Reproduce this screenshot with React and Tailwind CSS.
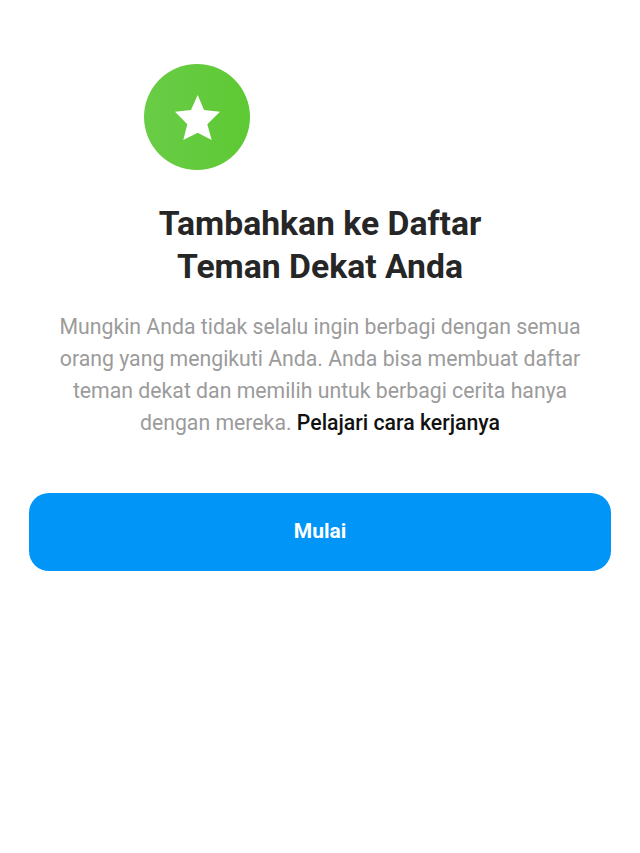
export default function App() {
  return (
    <div className="min-h-[853px] bg-white font-['Roboto',sans-serif] flex flex-col">
      <div className="pt-[64px] pl-[144px]">
        <div className="h-[106px] w-[106px] rounded-full bg-gradient-to-r from-[#69cc46] to-[#5dc933]">
          <svg width="106" height="106" viewBox="0 0 106 106" fill="#fff">
            <path d="M53.7 31L60 46l16 1.7-12.7 12.6L67.7 76l-14-7.3L39.3 76l4-15.7L31 47.700l16-1.700z" />
          </svg>
        </div>
      </div>
      <h1 className="mt-[32px] text-center text-[33.7px] leading-[43px] font-bold text-[#262626]">
        Tambahkan ke Daftar
        <br />
        Teman Dekat Anda
      </h1>
      <p className="mt-[23px] px-[54px] text-center text-[21.25px] leading-[32px] text-[#9b9b9b]">
        Mungkin Anda tidak selalu ingin berbagi dengan semua orang yang mengikuti Anda. Anda bisa membuat daftar teman dekat dan memilih untuk berbagi cerita hanya dengan mereka.{' '}
        <span className="font-medium text-[#111111]">Pelajari cara kerjanya</span>
      </p>
      <div className="mt-[54px] px-[29px]">
        <button className="h-[78px] w-full rounded-[20px] bg-[#0095f6] text-[21px] font-bold text-white">
          Mulai
        </button>
      </div>
    </div>
  )
}
